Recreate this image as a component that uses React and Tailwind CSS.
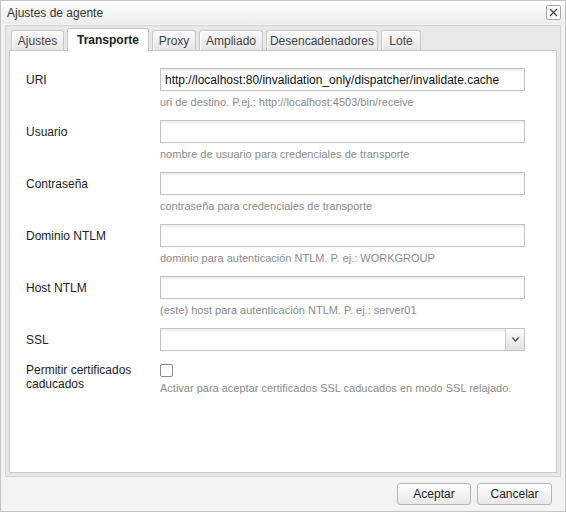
import React from "react";

const font = { fontFamily: '"Liberation Sans", Arial, sans-serif' };

function Tab({ label, width, active }) {
  if (active) {
    return (
      <div
        className="relative z-10 -mb-px flex h-[23px] items-center justify-center rounded-t-[3px] border border-b-0 border-[#c6c6c6] bg-white text-[12px] font-bold text-[#222]"
        style={{ width }}
      >
        {label}
      </div>
    );
  }
  return (
    <div
      className="flex h-[20px] items-center justify-center rounded-t-[3px] border border-b-0 border-[#c6c6c6] bg-gradient-to-b from-[#fbfbfb] to-[#e6e6e6] text-[12px] text-[#444] shadow-[inset_1px_1px_0_#ffffff]"
      style={{ width }}
    >
      {label}
    </div>
  );
}

function TextInput({ value }) {
  return (
    <div className="flex h-[23px] w-[365px] items-center border border-[#c2c2c2] bg-white px-[4px] text-[12px] text-[#111] shadow-[inset_0_2px_2px_rgba(0,0,0,0.07)]">
      {value}
    </div>
  );
}

function Row({ label, value, hint }) {
  return (
    <div className="flex h-[52px]">
      <div className="flex h-[23px] w-[150px] items-center pl-[16px] text-[12px] text-[#222]">
        {label}
      </div>
      <div className="flex flex-col">
        <TextInput value={value} />
        <div className="mt-[4px] h-[14px] text-[11px] leading-[14px] text-[#8a8a8a]">
          {hint}
        </div>
      </div>
    </div>
  );
}

export default function App() {
  return (
    <div
      className="flex h-[512px] w-[566px] flex-col border border-[#c4c4c4] bg-[#f3f3f3]"
      style={font}
    >
      {/* Title bar */}
      <div className="flex h-[23px] items-center justify-between bg-gradient-to-b from-white to-[#ececec] pl-[6px] pr-[4px]">
        <span className="text-[12px] text-[#333]">Ajustes de agente</span>
        <div className="flex h-[15px] w-[15px] items-center justify-center rounded-[2px] border border-[#a8a8a8] bg-white">
          <svg width="9" height="9" viewBox="0 0 9 9">
            <path d="M1 1L8 8M8 1L1 8" stroke="#444" strokeWidth="1.3" />
          </svg>
        </div>
      </div>

      {/* Tab container */}
      <div className="mx-[4px] mt-[1px] flex h-[452px] flex-col border border-[#d2d2d2] bg-[#e8e8e8] px-[3px] pb-[3px] pt-[3px]">
        <div className="flex h-[21px] items-end gap-[3px] pl-[2px]">
          <Tab label="Ajustes" width={53} />
          <Tab label="Transporte" width={82} active />
          <Tab label="Proxy" width={44} />
          <Tab label="Ampliado" width={64} />
          <Tab label="Desencadenadores" width={112} />
          <Tab label="Lote" width={40} />
        </div>
        <div className="flex-1 border border-[#c6c6c6] bg-white pt-[17px]">
          <Row
            label="URI"
            value="http://localhost:80/invalidation_only/dispatcher/invalidate.cache"
            hint="uri de destino. P.ej.: http://localhost:4503/bin/receive"
          />
          <Row label="Usuario" value="" hint="nombre de usuario para credenciales de transporte" />
          <Row label="Contraseña" value="" hint="contraseña para credenciales de transporte" />
          <Row
            label="Dominio NTLM"
            value=""
            hint="dominio para autenticación NTLM. P. ej.: WORKGROUP"
          />
          <Row
            label="Host NTLM"
            value=""
            hint="(este) host para autenticación NTLM. P. ej.: server01"
          />
          {/* SSL select */}
          <div className="flex h-[35px]">
            <div className="flex h-[23px] w-[150px] items-center pl-[16px] text-[12px] text-[#222]">
              SSL
            </div>
            <div className="flex h-[23px] w-[365px] border border-[#c2c2c2] bg-white shadow-[inset_0_2px_2px_rgba(0,0,0,0.07)]">
              <div className="flex-1" />
              <div className="flex w-[19px] items-center justify-center border-l border-[#c8c8c8] bg-gradient-to-b from-[#fbfbfb] to-[#e2e2e2]">
                <svg width="9" height="6" viewBox="0 0 9 6">
                  <path d="M0.5 0.5L4.5 5L8.5 0.5L6.8 0.5L4.5 3L2.2 0.5Z" fill="#444" />
                </svg>
              </div>
            </div>
          </div>
          {/* Checkbox row */}
          <div className="flex">
            <div className="w-[150px] pl-[16px] text-[12px] leading-[14px] text-[#222]">
              Permitir certificados
              <br />
              caducados
            </div>
            <div className="flex flex-col pt-[1px]">
              <div className="h-[13px] w-[13px] rounded-[2px] border border-[#8a8a8a] bg-white" />
              <div className="mt-[4px] text-[11px] leading-[14px] text-[#8a8a8a]">
                Activar para aceptar certificados SSL caducados en modo SSL relajado.
              </div>
            </div>
          </div>
        </div>
      </div>

      {/* Footer */}
      <div className="flex flex-1 items-center justify-end gap-[6px] pr-[13px]">
        <button className="flex h-[22px] w-[74px] items-center justify-center rounded-[3px] border border-[#b4b4b4] bg-gradient-to-b from-white to-[#e8e8e8] text-[12px] text-[#222]">
          Aceptar
        </button>
        <button className="flex h-[22px] w-[75px] items-center justify-center rounded-[3px] border border-[#b4b4b4] bg-gradient-to-b from-white to-[#e8e8e8] text-[12px] text-[#222]">
          Cancelar
        </button>
      </div>
    </div>
  );
}
